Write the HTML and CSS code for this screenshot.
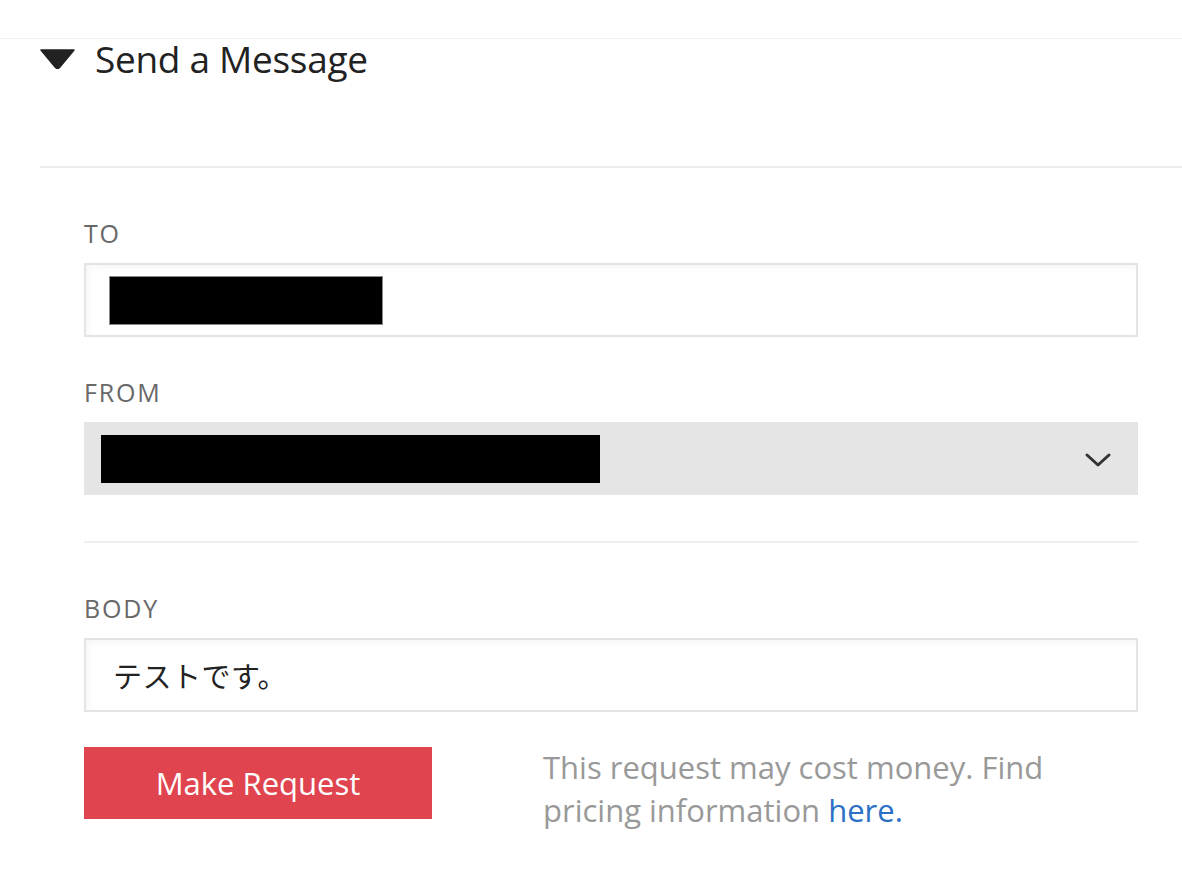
FILE: index.html
```html
<!DOCTYPE html>
<html lang="en">
<head>
<meta charset="utf-8">
<title>Send a Message</title>
<link rel="stylesheet" href="styles.css">
</head>
<body>
<div class="page">
  <section class="panel">
    <header class="panel-head">
      <svg class="caret" width="35" height="20" viewBox="0 0 35 20" aria-hidden="true">
        <path d="M1 1 L34 1 L19.5 18.5 Q17.5 20.5 15.5 18.5 Z" fill="#222" stroke="#222" stroke-width="1.5" stroke-linejoin="round"/>
      </svg>
      <h1 class="title">Send a Message</h1>
    </header>
    <div class="divider"></div>
    <form class="form">
      <div class="field field-to">
        <label class="label">TO</label>
        <div class="input input-to"><span class="redact redact-to"></span></div>
      </div>
      <div class="field field-from">
        <label class="label">FROM</label>
        <div class="select">
          <span class="redact redact-from"></span>
          <svg class="chevron" width="28" height="16" viewBox="0 0 28 16" aria-hidden="true">
            <path d="M3 3 L14 13 L25 3" fill="none" stroke="#333" stroke-width="3" stroke-linecap="round" stroke-linejoin="round"/>
          </svg>
        </div>
      </div>
      <div class="sep"></div>
      <div class="field field-body">
        <label class="label">BODY</label>
        <div class="input input-body">テストです。</div>
      </div>
      <div class="actions">
        <button type="button" class="btn">Make Request</button>
        <p class="note">This request may cost money. Find pricing information <a href="#" class="link">here.</a></p>
      </div>
    </form>
  </section>
</div>
</body>
</html>
```

FILE: styles.css
```css
html, body {
  margin: 0;
  padding: 0;
  background: #fff;
}
body {
  font-family: "Open Sans", "Noto Sans CJK JP", sans-serif;
  color: #222;
}
.page {
  padding-top: 38px;
}
.panel {
  border-top: 1px solid #f3f3f3;
}
.panel-head {
  display: flex;
  align-items: flex-start;
  padding-left: 40px;
  height: 127px;
}
.caret {
  display: block;
  margin-top: 10px;
  margin-right: 20px;
  flex: none;
}
.title {
  margin: 0;
  font-size: 37px;
  line-height: 40px;
  font-weight: 400;
  color: #222;
  letter-spacing: -0.3px;
}
.divider {
  margin-left: 40px;
  height: 2px;
  background: #ececec;
}
.form {
  padding: 0 44px 0 84px;
}
.field {
  display: flex;
  flex-direction: column;
}
.field-to { padding-top: 49px; }
.field-from { padding-top: 39px; }
.field-body { padding-top: 49px; }
.label {
  font-size: 25px;
  line-height: 32px;
  letter-spacing: 1.8px;
  color: #686868;
  margin-bottom: 14px;
}
.input {
  box-sizing: border-box;
  height: 74px;
  border: 2px solid #e4e4e4;
  box-shadow: inset 3px 3px 6px rgba(0, 0, 0, 0.035);
  background: #fff;
  display: flex;
  align-items: center;
}
.input-to {
  padding-left: 24px;
}
.input-body {
  padding-left: 27px;
  font-family: "Noto Sans CJK JP", sans-serif;
  font-size: 29px;
  color: #222;
  letter-spacing: 0.5px;
}
.redact {
  display: block;
  background: #000;
}
.redact-to {
  width: 272px;
  height: 47px;
  box-shadow: 0 0 0 1px #888;
}
.redact-from {
  width: 499px;
  height: 48px;
}
.select {
  box-sizing: border-box;
  height: 73px;
  background: #e5e5e5;
  display: flex;
  align-items: center;
  justify-content: space-between;
  padding: 0 26px 0 17px;
}
.chevron {
  display: block;
  margin-top: 2px;
}
.sep {
  margin-top: 46px;
  height: 2px;
  background: #efefef;
}
.actions {
  display: flex;
  align-items: flex-start;
  margin-top: 35px;
  gap: 111px;
}
.btn {
  flex: none;
  width: 348px;
  height: 72px;
  border: 0;
  border-radius: 0;
  background: #e0454f;
  color: #fff;
  font-family: "Open Sans", sans-serif;
  font-size: 31px;
  padding: 0;
  margin: 0;
  cursor: pointer;
}
.note {
  margin: -1px 0 0 0;
  font-size: 31px;
  line-height: 43px;
  color: #999;
  max-width: 540px;
}
.link {
  color: #2b6fc7;
  text-decoration: none;
}
```
